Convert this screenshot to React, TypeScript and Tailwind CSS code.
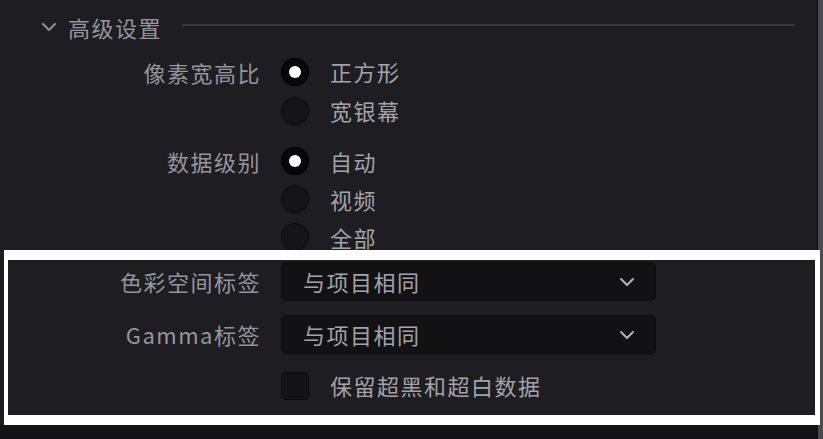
import { ChevronDown } from 'lucide-react';

const font = { fontFamily: '"Noto Sans CJK SC", "Noto Sans", sans-serif' };

function Radio({ checked }: { checked?: boolean }) {
  return (
    <span
      className={
        checked
          ? 'flex h-[26px] w-[26px] shrink-0 items-center justify-center rounded-full bg-[#08080a] ring-1 ring-[#000]'
          : 'flex h-[26px] w-[26px] shrink-0 items-center justify-center rounded-full bg-[#151517] ring-1 ring-[#0c0c0e]'
      }
    >
      {checked && <span className="h-[12px] w-[12px] rounded-full bg-white" />}
    </span>
  );
}

function RadioGroup({
  label,
  options,
  rowH,
}: {
  label: string;
  options: { text: string; checked?: boolean }[];
  rowH: string;
}) {
  return (
    <div className="flex">
      <div className={`w-[261px] shrink-0 text-right ${rowH} leading-none flex items-center justify-end`}>
        <span>{label}</span>
      </div>
      <div className="ml-[21px] flex flex-col">
        {options.map((o) => (
          <div key={o.text} className={`flex items-center gap-[22px] ${rowH}`}>
            <Radio checked={o.checked} />
            <span className="text-[#a3a3a8]">{o.text}</span>
          </div>
        ))}
      </div>
    </div>
  );
}

function Select({ label, value }: { label: string; value: string }) {
  return (
    <div className="flex items-center">
      <div className="w-[261px] shrink-0 text-right">{label}</div>
      <div className="ml-[21px] flex h-[37px] w-[373px] items-center justify-between rounded-[4px] bg-[#121214] pl-[21px] pr-[16px] ring-1 ring-[#0c0c0e]">
        <span className="text-[#a3a3a8]">{value}</span>
        <ChevronDown className="h-[24px] w-[24px] text-[#b4b4b8]" strokeWidth={2} />
      </div>
    </div>
  );
}

export default function App() {
  return (
    <div
      className="relative flex h-[439px] w-[823px] overflow-hidden bg-[#1e1d22] text-[22px] tracking-[1.5px] text-[#95959b]"
      style={font}
    >
      <div className="flex flex-1 flex-col">
        {/* section header */}
        <div className="box-content flex h-[34px] items-center pb-[6px] pl-[37px] pt-[10px]">
          <ChevronDown className="h-[24px] w-[24px] text-[#8e8e94]" strokeWidth={2.2} />
          <span className="ml-[7px] leading-none">高级设置</span>
          <div className="ml-[20px] mr-[22px] mt-[-4px] h-[2px] flex-1 bg-[#36363c]" />
        </div>

        <div className="mt-[2px]">
          <RadioGroup
            label="像素宽高比"
            rowH="h-[39px]"
            options={[{ text: '正方形', checked: true }, { text: '宽银幕' }]}
          />
        </div>

        <div className="mt-[12px]">
          <RadioGroup
            label="数据级别"
            rowH="h-[38px]"
            options={[{ text: '自动', checked: true }, { text: '视频' }, { text: '全部' }]}
          />
        </div>

        <div className="mt-[7px] flex flex-col gap-[16px]">
          <Select label="色彩空间标签" value="与项目相同" />
          <Select label="Gamma标签" value="与项目相同" />
        </div>

        <div className="mt-[16px] flex items-center">
          <div className="ml-[282px] h-[26px] w-[26px] rounded-[4px] bg-[#141416] ring-1 ring-[#0b0b0d]" />
          <span className="ml-[22px] text-[#a3a3a8]">保留超黑和超白数据</span>
        </div>

        <div className="flex-1" />
        <div className="h-[14px] bg-[#141417]" />
      </div>

      <div className="w-px bg-[#101012]" />
      <div className="w-[5px] bg-[#4a4a50]" />

      {/* highlight frame */}
      <div className="pointer-events-none absolute left-[4px] top-[250px] h-[175px] w-[816px] border-b-[10px] border-l-[4px] border-r-[5px] border-t-[10px] border-white" />
    </div>
  );
}
